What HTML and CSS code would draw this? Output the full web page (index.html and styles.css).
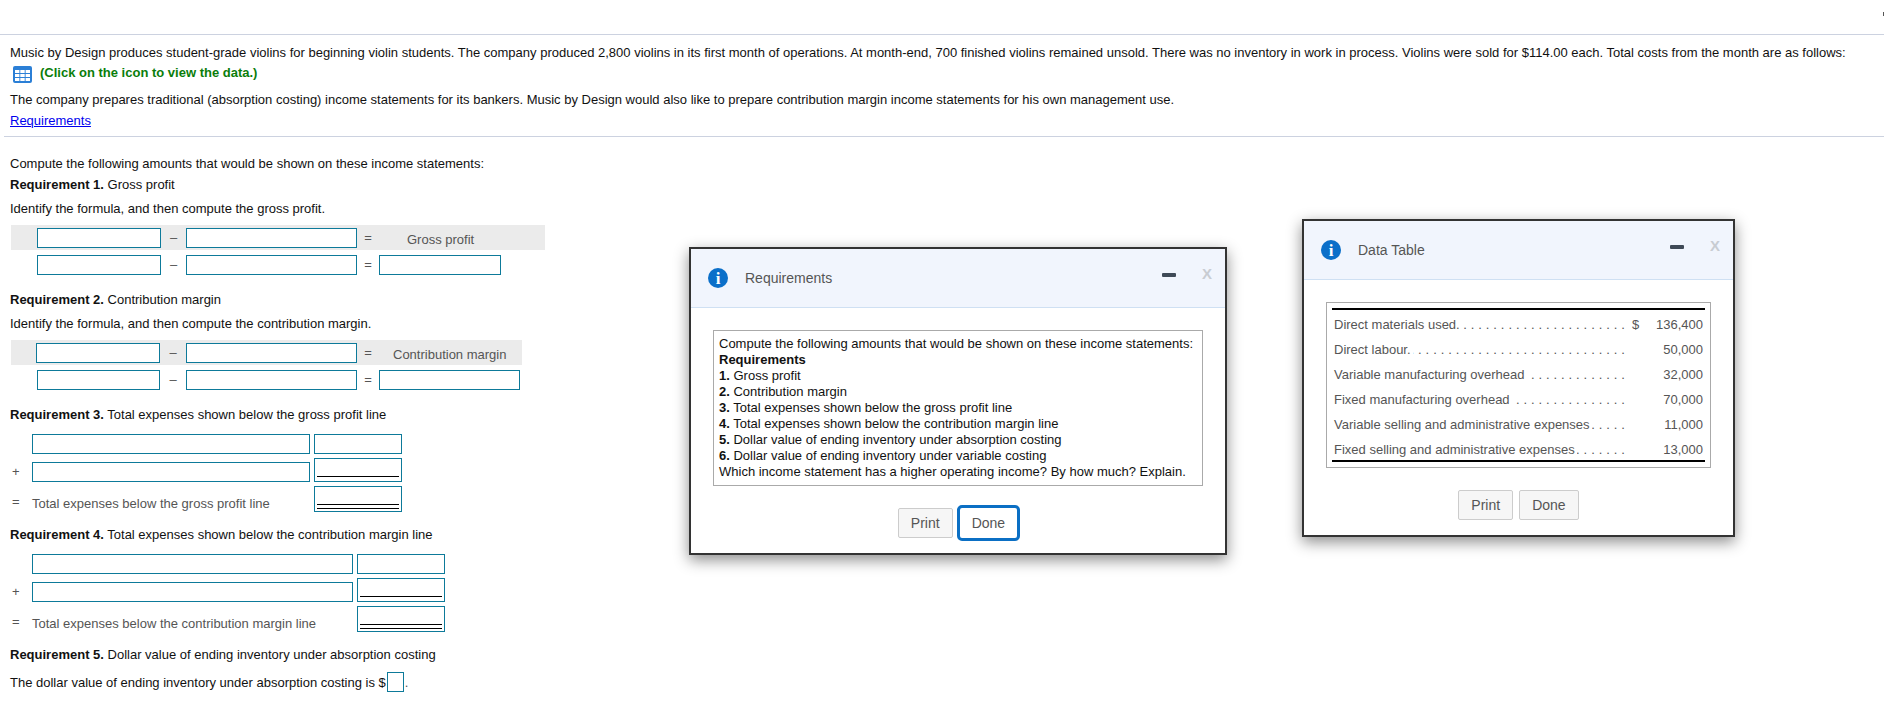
FILE: index.html
```html
<!DOCTYPE html>
<html lang="en">
<head>
<meta charset="utf-8">
<title>Music by Design</title>
<link rel="stylesheet" href="styles.css">
</head>
<body>
<span class="corner-mark"></span>
<main class="page">
  <section class="intro">
    <p class="l-first">Music by Design produces student-grade violins for beginning violin students. The company produced 2,800 violins in its first month of operations. At month-end, 700 finished violins remained unsold. There was no inventory in work in process. Violins were sold for $114.00 each. Total costs from the month are as follows:</p>
    <p class="l-data">
      <svg class="grid-icon" viewBox="0 0 19 17" width="19" height="17"><rect width="19" height="17" rx="2" fill="#2b7fd6"/><g fill="#fff"><rect x="2" y="4" width="4.4" height="3"/><rect x="7.3" y="4" width="4.4" height="3"/><rect x="12.6" y="4" width="4.4" height="3"/><rect x="2" y="8" width="4.4" height="3"/><rect x="7.3" y="8" width="4.4" height="3"/><rect x="12.6" y="8" width="4.4" height="3"/><rect x="2" y="12" width="4.4" height="3"/><rect x="7.3" y="12" width="4.4" height="3"/><rect x="12.6" y="12" width="4.4" height="3"/></g></svg>
      <span class="green">(Click on the icon to view the data.)</span>
    </p>
    <p class="l-co">The company prepares traditional (absorption costing) income statements for its bankers. Music by Design would also like to prepare contribution margin income statements for his own management use.</p>
    <p class="l-link"><a href="#">Requirements</a></p>
  </section>
  <section class="work">
    <p class="t-compute">Compute the following amounts that would be shown on these income statements:</p>
    <p class="t-req1"><b>Requirement 1.</b> Gross profit</p>
    <p class="t-id1">Identify the formula, and then compute the gross profit.</p>
    <div class="formula head head1">
      <span class="box a1"></span><span class="op minus">–</span><span class="box b1"></span><span class="op eq">=</span><span class="lab lab1">Gross profit</span>
    </div>
    <div class="formula answer">
      <span class="box a1"></span><span class="op minus">–</span><span class="box b1"></span><span class="op eq">=</span><span class="box c1"></span>
    </div>
    <p class="t-req2"><b>Requirement 2.</b> Contribution margin</p>
    <p class="t-id2">Identify the formula, and then compute the contribution margin.</p>
    <div class="formula head head2">
      <span class="box a2h"></span><span class="op minus2">–</span><span class="box b1"></span><span class="op eq">=</span><span class="lab lab2">Contribution margin</span>
    </div>
    <div class="formula answer">
      <span class="box a2"></span><span class="op minus2">–</span><span class="box b1"></span><span class="op eq">=</span><span class="box c2"></span>
    </div>
    <p class="t-req3"><b>Requirement 3.</b> Total expenses shown below the gross profit line</p>
    <div class="ledger led3">
      <span class="sign"></span><span class="box wide"></span><span class="box amt"></span>
      <span class="sign">+</span><span class="box wide"></span><span class="box amt single"><i></i></span>
      <span class="sign">=</span><span class="lab wide-lab">Total expenses below the gross profit line</span><span class="box amt dbl"><i></i></span>
    </div>
    <p class="t-req4"><b>Requirement 4.</b> Total expenses shown below the contribution margin line</p>
    <div class="ledger led4">
      <span class="sign"></span><span class="box wide"></span><span class="box amt"></span>
      <span class="sign">+</span><span class="box wide"></span><span class="box amt single"><i></i></span>
      <span class="sign">=</span><span class="lab wide-lab">Total expenses below the contribution margin line</span><span class="box amt dbl"><i></i></span>
    </div>
    <p class="t-req5"><b>Requirement 5.</b> Dollar value of ending inventory under absorption costing</p>
    <p class="t-last">The dollar value of ending inventory under absorption costing is $<span class="box tiny"></span><span class="dot">.</span></p>
  </section>
</main>

<aside class="dialog dlg-req">
  <header class="dlg-head">
    <svg class="info" viewBox="0 0 20 20" width="20" height="20"><circle cx="10" cy="10" r="10" fill="#0b6fc9"/><text x="10" y="16" text-anchor="middle" class="info-i">i</text></svg>
    <span class="dlg-title">Requirements</span>
    <span class="dlg-min"></span>
    <span class="dlg-x">X</span>
  </header>
  <div class="reqbox">
    Compute the following amounts that would be shown on these income statements:<br>
    <b>Requirements</b><br>
    <b>1.</b> Gross profit<br>
    <b>2.</b> Contribution margin<br>
    <b>3.</b> Total expenses shown below the gross profit line<br>
    <b>4.</b> Total expenses shown below the contribution margin line<br>
    <b>5.</b> Dollar value of ending inventory under absorption costing<br>
    <b>6.</b> Dollar value of ending inventory under variable costing<br>
    Which income statement has a higher operating income? By how much? Explain.
  </div>
  <footer class="dlg-foot foot-req">
    <button class="btn">Print</button><button class="btn focus">Done</button>
  </footer>
</aside>

<aside class="dialog dlg-data">
  <header class="dlg-head">
    <svg class="info" viewBox="0 0 20 20" width="20" height="20"><circle cx="10" cy="10" r="10" fill="#0b6fc9"/><text x="10" y="16" text-anchor="middle" class="info-i">i</text></svg>
    <span class="dlg-title">Data Table</span>
    <span class="dlg-min"></span>
    <span class="dlg-x">X</span>
  </header>
  <div class="databox">
    <div class="datarule">
      <div class="drow"><span class="dl">Direct materials used.</span><span class="cur">$</span><span class="num">136,400</span></div>
      <div class="drow"><span class="dl">Direct labour.</span><span class="cur"></span><span class="num">50,000</span></div>
      <div class="drow"><span class="dl">Variable manufacturing overhead</span><span class="cur"></span><span class="num">32,000</span></div>
      <div class="drow"><span class="dl">Fixed manufacturing overhead</span><span class="cur"></span><span class="num">70,000</span></div>
      <div class="drow"><span class="dl">Variable selling and administrative expenses</span><span class="cur"></span><span class="num">11,000</span></div>
      <div class="drow"><span class="dl">Fixed selling and administrative expenses</span><span class="cur"></span><span class="num">13,000</span></div>
    </div>
  </div>
  <footer class="dlg-foot foot-data">
    <button class="btn">Print</button><button class="btn">Done</button>
  </footer>
</aside>
</body>
</html>
```
FILE: styles.css
```css
* { box-sizing: border-box; }
html, body { margin: 0; padding: 0; background: #fff; }
body { height: 705px; overflow: hidden; font: 13px/16px "Liberation Sans", Arial, sans-serif; color: #111; position: relative; }
p { margin: 0; }
b { font-weight: 700; }

.corner-mark { position: absolute; right: 0; top: 12px; width: 1px; height: 4px; background: #555; }

.page { padding-top: 34px; }
.intro { border-top: 1px solid #ccd2e0; padding: 10px 0 0 10px; height: 102px; white-space: nowrap; }
.l-data { margin-top: 4px; display: flex; align-items: flex-start; height: 16px; margin-left: 3px; }
.grid-icon { margin: 1px 8px 0 0; flex: none; }
.green { color: #0a7d0a; font-weight: 700; }
.l-co { margin-top: 11px; }
.l-link { margin-top: 5px; }
.l-link a { color: #0000ee; text-decoration: underline; }

.work { margin-left: 4px; border-top: 1px solid #ccd2e0; padding: 19px 0 0 6px; }
.t-req1 { margin-top: 5px; }
.t-id1 { margin-top: 8px; }

.formula { margin-left: 1px; display: flex; align-items: center; padding-left: 26px; }
.head { background: #ebebeb; height: 25px; }
.head1 { width: 534px; margin-top: 8px; }
.head2 { width: 511px; margin-top: 8px; }
.answer { height: 20px; margin-top: 5px; }
.box { display: inline-block; height: 20px; border: 1px solid #0d7a9a; background: #fff; flex: none; }
.op { color: #555; text-align: center; flex: none; }
.minus { width: 25px; }
.minus2 { width: 26px; }
.eq { width: 22px; }
.a1 { width: 124px; }
.b1 { width: 171px; }
.c1 { width: 122px; }
.a2 { width: 123px; }
.a2h { width: 124px; margin-left: -1px; }
.c2 { width: 141px; }
.lab { color: #555; }
.lab1 { margin-left: 28px; padding-top: 4px; }
.lab2 { margin-left: 14px; padding-top: 4px; }

.t-req2 { margin-top: 17px; }
.t-id2 { margin-top: 8px; }
.t-req3 { margin-top: 17px; }
.t-req4 { margin-top: 15px; }
.t-req5 { margin-top: 15px; }
.t-last { margin-top: 9px; display: flex; align-items: flex-start; height: 20px; line-height: 22px; }
.tiny { width: 17px; margin-left: 1px; }
.dot { color: #555; margin-left: 1px; }

.ledger { display: grid; align-items: end; margin-top: 11px; row-gap: 4px; }
.led3 { width: 392px; grid-template-columns: 22px 278px 92px; }
.led4 { width: 435px; grid-template-columns: 22px 321px 92px; }
.sign { color: #555; padding-left: 2px; line-height: 20px; }
.amt { margin-left: 4px; position: relative; }
.amt i { position: absolute; left: 2px; right: 2px; display: block; }
.single { height: 24px; }
.single i { bottom: 4px; border-bottom: 1px solid #000; }
.dbl { height: 26px; }
.dbl i { bottom: 2px; height: 5px; border-top: 1px solid #000; border-bottom: 1px solid #000; }
.wide-lab { white-space: nowrap; }

.dialog { position: absolute; background: #fff; border: 2px solid #333; box-shadow: 0 5px 14px rgba(0,0,0,.45); }
.dlg-req { left: 689px; top: 247px; width: 538px; height: 308px; }
.dlg-data { left: 1302px; top: 219px; width: 433px; height: 318px; }
.dlg-head { height: 59px; background: #f1f5fd; border-bottom: 1px solid #cfe0f3; display: flex; align-items: center; padding-left: 17px; position: relative; }
.info { flex: none; }
.info-i { font: 700 17px "Liberation Serif", serif; fill: #fff; }
.dlg-title { font-size: 14px; margin-left: 17px; color: #555; }
.dlg-min { position: absolute; top: 24px; right: 49px; width: 14px; height: 4px; border-radius: 1px; background: #3f4a57; }
.dlg-x { position: absolute; top: 17px; right: 13px; font-size: 15px; font-weight: 700; color: #c8ccd2; }
.reqbox { margin: 22px 22px 0; height: 156px; border: 1px solid #aaa; padding: 5px 5px 0; }
.dlg-foot { display: flex; justify-content: center; align-items: center; }
.foot-req { margin-top: 19px; gap: 4px; padding-left: 2px; }
.foot-data { margin-top: 22px; gap: 6px; }
.btn { height: 30px; padding: 0 12px; font: 14px "Liberation Sans", Arial, sans-serif; color: #555; background: #f6f6f6; border: 1px solid #ccc; border-radius: 2px; }
.btn.focus { height: 36px; background: #fff; border: 3px solid #0b6fc4; border-radius: 5px; }
.databox { margin: 22px 22px 0; height: 166px; border: 1px solid #aaa; padding: 5px; }
.datarule { border-top: 2px solid #000; border-bottom: 2px solid #000; height: 154px; padding: 2px 0 0 2px; }
.drow { display: flex; height: 25px; line-height: 25px; color: #555; }
.dl { width: 291px; display: flex; white-space: nowrap; flex: none; }
.dl::after { content: ". . . . . . . . . . . . . . . . . . . . . . . . . . . . . . . . . . . . . . . . . ."; flex: 1; min-width: 0; overflow: hidden; direction: rtl; text-align: right; margin-left: 2px; letter-spacing: .15px; }
.cur { width: 11px; margin-left: 7px; flex: none; }
.num { width: 60px; text-align: right; flex: none; white-space: nowrap; }
```
